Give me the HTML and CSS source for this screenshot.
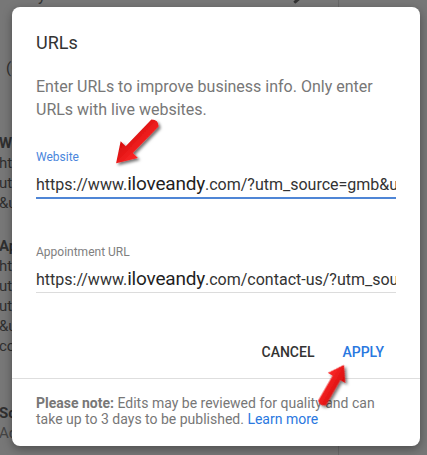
FILE: index.html
```html
<!DOCTYPE html>
<html lang="en">
<head>
    <meta charset="UTF-8">
    <meta name="viewport" content="width=device-width, initial-scale=1.0">
    <title>URLs</title>
    <link rel="stylesheet" href="styles.css">
</head>
<body>
    <div class="backdrop">
        <div class="backdrop-top">
            <span class="stray">y</span>
            <span class="pencil"></span>
        </div>
        <div class="backdrop-col">
            <p class="bd-line bd-indent">(Optional) add links to your business</p>
            <div class="bd-group">
                <p class="bd-line bd-head">Website</p>
                <p class="bd-line">https://www.iloveandy.com/?</p>
                <p class="bd-line">utm_source=gmb&amp;utm_medium=</p>
                <p class="bd-line">&amp;utm_campaign=local</p>
            </div>
            <div class="bd-group">
                <p class="bd-line bd-head">Appointment URL</p>
                <p class="bd-line">https://www.iloveandy.com/contact-us/</p>
                <p class="bd-line">utm_source=gmb</p>
                <p class="bd-line">utm_medium=organic</p>
                <p class="bd-line">&amp;utm_campaign=appointments</p>
                <p class="bd-line">contact</p>
            </div>
            <div class="bd-group bd-last">
                <p class="bd-line bd-head">Social profiles</p>
                <p class="bd-line bd-faint">Add profiles</p>
            </div>
        </div>
        <div class="backdrop-rule"></div>
    </div>

    <div class="dialog">
        <div class="dialog-body">
            <h2 class="dialog-title">URLs</h2>
            <p class="dialog-desc">Enter URLs to improve business info. Only enter URLs with live websites.</p>

            <div class="field field-active">
                <label class="field-label">Website</label>
                <div class="field-value">https://www.<span class="brand">iloveandy</span>.com/?utm_source=gmb&amp;utm_medium=organic</div>
            </div>

            <div class="field">
                <label class="field-label">Appointment URL</label>
                <div class="field-value">https://www.<span class="brand">iloveandy</span>.com/contact-us/?utm_source=gmb</div>
            </div>
        </div>

        <div class="actions">
            <button class="btn">Cancel</button>
            <button class="btn btn-primary">Apply</button>
        </div>

        <div class="note">
            <b>Please note:</b> Edits may be reviewed for quality and can take up to 3 days to be published. <a href="#" class="link">Learn more</a>
        </div>
    </div>

    <svg class="arrows" width="427" height="455" viewBox="0 0 427 455">
        <defs>
            <filter id="shadow" x="-50%" y="-50%" width="200%" height="200%">
                <feDropShadow dx="2" dy="2" stdDeviation="1.5" flood-color="#000" flood-opacity="0.55"/>
            </filter>
            <linearGradient id="red" x1="0" y1="0" x2="0" y2="1">
                <stop offset="0" stop-color="#ff2a2a"/>
                <stop offset="1" stop-color="#d40b0b"/>
            </linearGradient>
        </defs>
        <g filter="url(#shadow)">
            <path transform="translate(155 123) rotate(134)" fill="url(#red)"
                  d="M0 -5 L37 -5 L37 -12 L56 0 L37 12 L37 5 L0 5 Q-5 0 0 -5 Z"/>
            <path transform="translate(322 403) rotate(-60)" fill="url(#red)"
                  d="M0 -4.5 L29 -4.5 L29 -10 L44 0 L29 10 L29 4.5 L0 4.5 Q-4 0 0 -4.5 Z"/>
        </g>
    </svg>
</body>
</html>
```

FILE: styles.css
```css
body {
    margin: 0;
    width: 427px;
    height: 455px;
    overflow: hidden;
    position: relative;
    background-color: #777777;
    font-family: Roboto, "Liberation Sans", Arial, sans-serif;
}
.backdrop {
    width: 427px;
    height: 455px;
    overflow: hidden;
    position: relative;
    color: #2f2f2f;
}
.backdrop-top {
    height: 8px;
    position: relative;
}
.stray {
    position: absolute;
    left: 38px;
    top: -14px;
    font-size: 16px;
    color: #333;
}
.pencil {
    position: absolute;
    left: 293px;
    top: -2px;
    width: 10px;
    height: 3px;
    background: #333;
    transform: rotate(-40deg);
    border-radius: 1px;
}
.backdrop-col {
    padding-top: 50px;
    margin-left: -1px;
}
.bd-line {
    margin: 0;
    font-size: 15px;
    line-height: 20px;
    white-space: nowrap;
}
.bd-indent {
    padding-left: 7px;
}
.bd-head {
    font-weight: 700;
}
.bd-faint {
    color: #444;
}
.bd-group {
    margin-top: 55px;
}
.bd-group + .bd-group {
    margin-top: 23px;
}
.bd-group.bd-last {
    margin-top: 47px;
}
.backdrop-rule {
    position: absolute;
    left: 338px;
    top: 0;
    width: 1px;
    height: 455px;
    background: #686868;
}
.dialog {
    position: absolute;
    left: 12px;
    top: 7px;
    width: 408px;
    height: 439px;
    background: #fff;
    border-radius: 8px;
    box-shadow: 0 3px 10px rgba(0,0,0,0.35);
    overflow: hidden;
}
.dialog-body {
    padding: 24px 24px 0 24px;
}
.dialog-title {
    margin: 0;
    font-size: 18px;
    line-height: 24px;
    font-weight: 400;
    color: #333;
}
.dialog-desc {
    margin: 20px 0 0 0;
    font-size: 16px;
    line-height: 23px;
    color: #777;
}
.field {
    margin-top: 28px;
    border-bottom: 1px solid #dcdcdc;
}
.field + .field {
    margin-top: 45px;
}
.field-active {
    border-bottom: 2px solid #4f86d6;
}
.field-label {
    display: block;
    font-size: 12px;
    line-height: 16px;
    color: #808080;
}
.field-active .field-label {
    color: #4a86dc;
}
.field-value {
    margin-top: 7px;
    font-size: 16px;
    line-height: 24px;
    color: #333;
    white-space: nowrap;
    overflow: hidden;
}
.brand {
    font-size: 19px;
    font-weight: 400;
    color: #1f1f1f;
    letter-spacing: -0.2px;
}
.actions {
    display: flex;
    justify-content: flex-end;
    gap: 12px;
    padding: 0 28px 0 0;
    margin-top: 41px;
    height: 36px;
}
.btn {
    background: none;
    border: none;
    padding: 0 8px;
    height: 36px;
    font-family: Roboto, "Liberation Sans", Arial, sans-serif;
    font-size: 14px;
    font-weight: 500;
    text-transform: uppercase;
    color: #333;
    cursor: pointer;
}
.btn-primary {
    color: #2a78e0;
}
.note {
    margin-top: 8px;
    border-top: 1px solid #dedede;
    padding: 16px 24px 18px 24px;
    font-size: 14px;
    line-height: 16px;
    color: #777;
}
.note b {
    color: #777;
}
.link {
    color: #2a78e0;
    text-decoration: none;
}
.arrows {
    position: absolute;
    left: 0;
    top: 0;
    pointer-events: none;
}
```
